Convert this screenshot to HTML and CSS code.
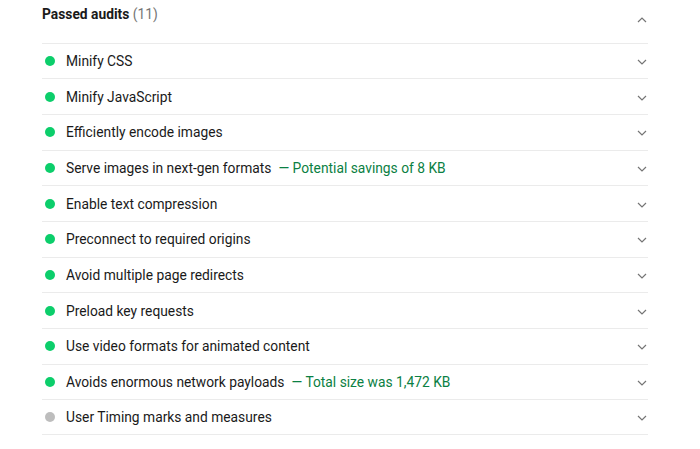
FILE: index.html
```html
<!DOCTYPE html>
<html lang="en">
<head>
    <meta charset="UTF-8">
    <meta name="viewport" content="width=device-width, initial-scale=1.0">
    <title>Passed audits</title>
    <link rel="stylesheet" href="styles.css">
</head>
<body>

<div class="audits">
    <div class="group-header">
        <span class="group-title">Passed audits <span class="count">(11)</span></span>
        <svg class="chevron up" viewBox="0 0 10 6"><polyline points="1,5 5,1 9,5"/></svg>
    </div>

    <div class="audit">
        <span class="dot pass"></span>
        <span class="title">Minify CSS</span>
        <svg class="chevron" viewBox="0 0 10 6"><polyline points="1,1 5,5 9,1"/></svg>
    </div>
    <div class="audit">
        <span class="dot pass"></span>
        <span class="title">Minify JavaScript</span>
        <svg class="chevron" viewBox="0 0 10 6"><polyline points="1,1 5,5 9,1"/></svg>
    </div>
    <div class="audit">
        <span class="dot pass"></span>
        <span class="title">Efficiently encode images</span>
        <svg class="chevron" viewBox="0 0 10 6"><polyline points="1,1 5,5 9,1"/></svg>
    </div>
    <div class="audit">
        <span class="dot pass"></span>
        <span class="title">Serve images in next-gen formats</span>
        <span class="display-value">— Potential savings of 8 KB</span>
        <svg class="chevron" viewBox="0 0 10 6"><polyline points="1,1 5,5 9,1"/></svg>
    </div>
    <div class="audit">
        <span class="dot pass"></span>
        <span class="title">Enable text compression</span>
        <svg class="chevron" viewBox="0 0 10 6"><polyline points="1,1 5,5 9,1"/></svg>
    </div>
    <div class="audit">
        <span class="dot pass"></span>
        <span class="title">Preconnect to required origins</span>
        <svg class="chevron" viewBox="0 0 10 6"><polyline points="1,1 5,5 9,1"/></svg>
    </div>
    <div class="audit">
        <span class="dot pass"></span>
        <span class="title">Avoid multiple page redirects</span>
        <svg class="chevron" viewBox="0 0 10 6"><polyline points="1,1 5,5 9,1"/></svg>
    </div>
    <div class="audit">
        <span class="dot pass"></span>
        <span class="title">Preload key requests</span>
        <svg class="chevron" viewBox="0 0 10 6"><polyline points="1,1 5,5 9,1"/></svg>
    </div>
    <div class="audit">
        <span class="dot pass"></span>
        <span class="title">Use video formats for animated content</span>
        <svg class="chevron" viewBox="0 0 10 6"><polyline points="1,1 5,5 9,1"/></svg>
    </div>
    <div class="audit">
        <span class="dot pass"></span>
        <span class="title">Avoids enormous network payloads</span>
        <span class="display-value">— Total size was 1,472 KB</span>
        <svg class="chevron" viewBox="0 0 10 6"><polyline points="1,1 5,5 9,1"/></svg>
    </div>
    <div class="audit last">
        <span class="dot manual"></span>
        <span class="title">User Timing marks and measures</span>
        <svg class="chevron" viewBox="0 0 10 6"><polyline points="1,1 5,5 9,1"/></svg>
    </div>
</div>

</body>
</html>
```

FILE: styles.css
```css
/* Page */
body {
    margin: 0;
    padding: 0;
    background: #fff;
    font-family: Roboto, "Liberation Sans", sans-serif;
    font-size: 13.8px;
    color: #1a1a1a;
}

.audits {
    width: 606px;
    margin-left: 42px;
}

/* Group header */
.group-header {
    display: flex;
    align-items: flex-start;
    justify-content: space-between;
    height: 42.5px;
    box-sizing: border-box;
    padding-top: 4px;
}

.group-title {
    font-weight: 700;
    line-height: 20px;
}

.count {
    color: #757575;
    font-weight: 400;
}

/* Audit rows */
.audit {
    display: flex;
    align-items: center;
    height: 35.68px;
    box-sizing: border-box;
    border-top: 1px solid #ebebeb;
}

.audit.last {
    border-bottom: 1px solid #ebebeb;
}

.dot {
    width: 10px;
    height: 10px;
    border-radius: 50%;
    margin: 0 11px 0 3px;
    flex-shrink: 0;
}

.dot.pass {
    background: #0cce6b;
}

.dot.manual {
    background: #bdbdbd;
}

.title {
    line-height: 20px;
}

.display-value {
    color: #0b8043;
    margin-left: 7px;
    line-height: 20px;
}

/* Chevrons */
.chevron {
    width: 10px;
    height: 6px;
    margin-left: auto;
    margin-right: 1px;
    margin-top: 2px;
    fill: none;
    stroke: #757575;
    stroke-width: 1.2;
}

.chevron.up {
    margin-top: 13px;
}
```
